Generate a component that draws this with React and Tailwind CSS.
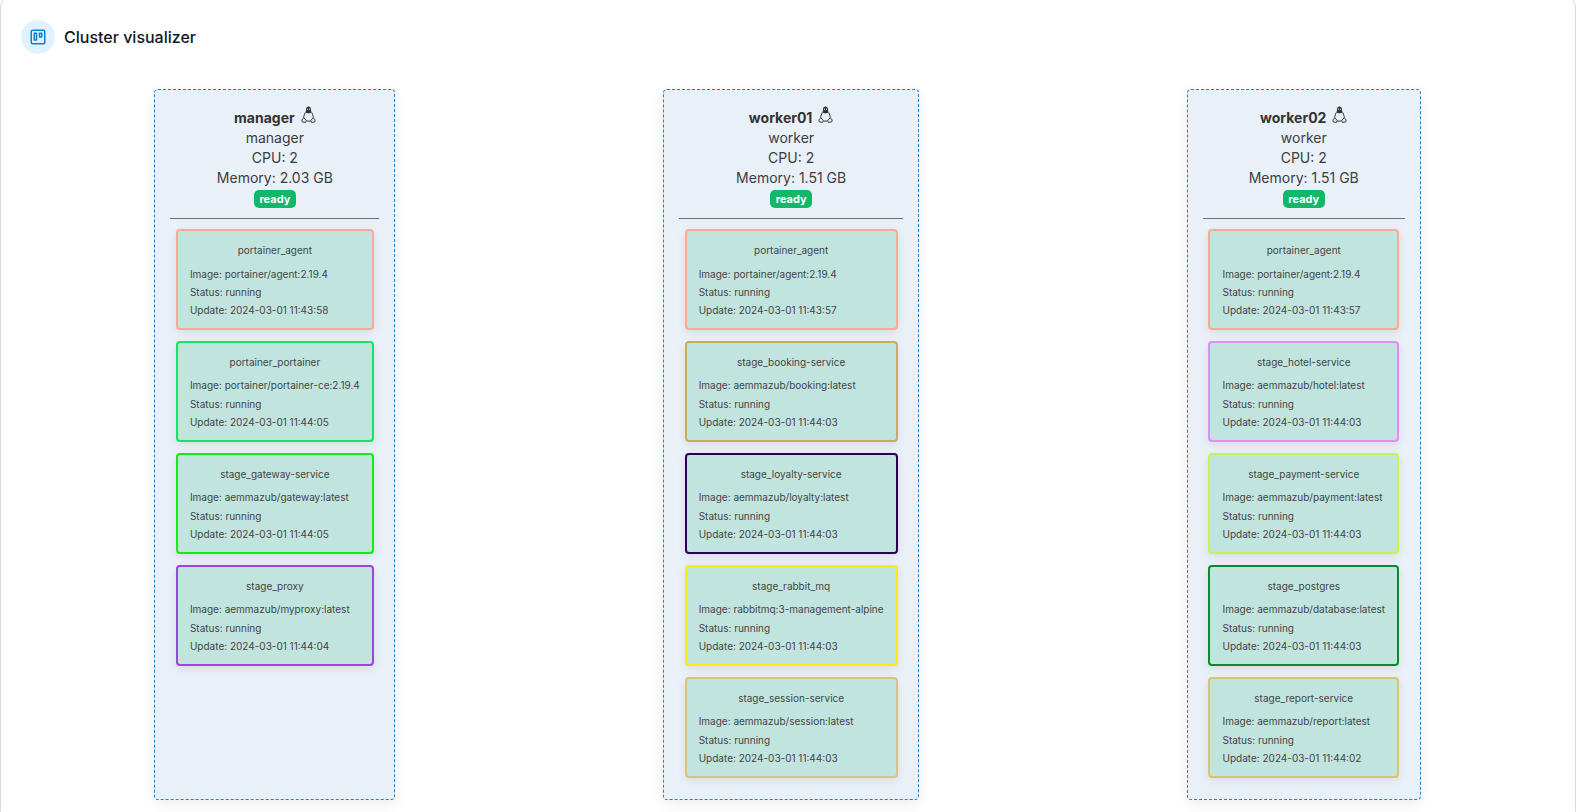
import React from 'react';
import { Trello } from 'lucide-react';

const nodes = [
  {
    name: 'manager',
    role: 'manager',
    memory: '2.03 GB',
    tasks: [
      { name: 'portainer_agent', image: 'portainer/agent:2.19.4', update: '2024-03-01 11:43:58', border: 'border-[#ffa899]' },
      { name: 'portainer_portainer', image: 'portainer/portainer-ce:2.19.4', update: '2024-03-01 11:44:05', border: 'border-[#0ce864]' },
      { name: 'stage_gateway-service', image: 'aemmazub/gateway:latest', update: '2024-03-01 11:44:05', border: 'border-[#0cf00c]' },
      { name: 'stage_proxy', image: 'aemmazub/myproxy:latest', update: '2024-03-01 11:44:04', border: 'border-[#9e42e0]' },
    ],
  },
  {
    name: 'worker01',
    role: 'worker',
    memory: '1.51 GB',
    tasks: [
      { name: 'portainer_agent', image: 'portainer/agent:2.19.4', update: '2024-03-01 11:43:57', border: 'border-[#ffa899]' },
      { name: 'stage_booking-service', image: 'aemmazub/booking:latest', update: '2024-03-01 11:44:03', border: 'border-[#c6b055]' },
      { name: 'stage_loyalty-service', image: 'aemmazub/loyalty:latest', update: '2024-03-01 11:44:03', border: 'border-[#2b0052]' },
      { name: 'stage_rabbit_mq', image: 'rabbitmq:3-management-alpine', update: '2024-03-01 11:44:03', border: 'border-[#f3ef12]' },
      { name: 'stage_session-service', image: 'aemmazub/session:latest', update: '2024-03-01 11:44:03', border: 'border-[#d5c67e]' },
    ],
  },
  {
    name: 'worker02',
    role: 'worker',
    memory: '1.51 GB',
    tasks: [
      { name: 'portainer_agent', image: 'portainer/agent:2.19.4', update: '2024-03-01 11:43:57', border: 'border-[#ffa899]' },
      { name: 'stage_hotel-service', image: 'aemmazub/hotel:latest', update: '2024-03-01 11:44:03', border: 'border-[#e28eec]' },
      { name: 'stage_payment-service', image: 'aemmazub/payment:latest', update: '2024-03-01 11:44:03', border: 'border-[#c9f44c]' },
      { name: 'stage_postgres', image: 'aemmazub/database:latest', update: '2024-03-01 11:44:03', border: 'border-[#0a8a30]' },
      { name: 'stage_report-service', image: 'aemmazub/report:latest', update: '2024-03-01 11:44:02', border: 'border-[#d5c674]' },
    ],
  },
];

function LinuxIcon() {
  return (
    <svg width="15" height="17" viewBox="0 0 14 16" fill="none" className="shrink-0">
      <path d="M7 .5C5.200.5 4.600 2 4.600 3.500c0 1-.2 1.700-.6 2.500l3 1 3-1c-.4-.8-.6-1.500-.6-2.500C9.400 2 8.800.5 7 .5z" fill="#333" />
      <circle cx="6" cy="3" r=".6" fill="#e9f0f8" />
      <circle cx="8" cy="3" r=".6" fill="#e9f0f8" />
      <path d="M4 6 2.600 9.500 2.400 11M10 6l1.400 3.500.2 1.500" stroke="#333" strokeWidth=".9" />
      <path d="M5 14.200h4" stroke="#333" strokeWidth=".9" />
      <path d="M.7 13.200 2.600 11l2.300 2.700-.8 1.800-3-.6zM13.300 13.200 11.400 11l-2.300 2.700.8 1.800 3-.6z" stroke="#333" strokeWidth=".9" strokeLinejoin="round" />
    </svg>
  );
}

function Task({ task }) {
  return (
    <div className={`mx-[5.5px] mb-[11px] rounded-[4px] border-2 bg-[#c2e4de] pt-[10px] pb-[8.500px] pl-[12px] pr-[12px] text-[10px] leading-[18.33px] text-[#444] shadow-[0_3px_10px_rgba(0,0,0,0.08)] ${task.border}`}>
      <div className="mb-[5.500px] h-[18px] text-center leading-[18px]">{task.name}</div>
      <div className="whitespace-nowrap">Image: {task.image}</div>
      <div>Status: running</div>
      <div className="whitespace-nowrap">Update: {task.update}</div>
    </div>
  );
}

function Node({ node }) {
  return (
    <div className="rounded-[4px] border border-dashed border-[#2b7cc4] bg-[#e9f0f8] px-[15px] pt-[17px] pb-[10px] shadow-[0_4px_14px_rgba(0,0,0,0.08)]">
      <div className="text-center text-[14px] leading-[20px] text-[#3d3d3d]">
        <div className="flex h-[21px] items-center justify-center gap-[6px] text-[#333]">
          <span className="font-bold">{node.name}</span>
          <span className="-mt-[7px]"><LinuxIcon /></span>
        </div>
        <div>{node.role}</div>
        <div>CPU: 2</div>
        <div>Memory: {node.memory}</div>
        <div className="mt-[2px] flex justify-center">
          <span className="flex h-[18px] w-[42px] items-center justify-center rounded-[5px] bg-[#12b76a] text-[11px] font-bold text-white">ready</span>
        </div>
      </div>
      <hr className="mt-[10px] mb-[10px] border-t border-[#6f6f6f]" />
      {node.tasks.map((task) => (
        <Task key={task.name} task={task} />
      ))}
    </div>
  );
}

export default function App() {
  return (
    <div className="h-screen overflow-hidden bg-white font-['Inter',sans-serif]">
      <div className="mr-[1px] -mt-[3px] rounded-[10px] border border-[#d5dae3] bg-white pb-[20px]">
        <div className="flex items-center gap-[9px] pl-[20px] pt-[22px]">
          <div className="flex h-[34px] w-[34px] items-center justify-center rounded-full bg-[#e0f2ff]">
            <Trello size={18} strokeWidth={2} className="text-[#0086c9]" />
          </div>
          <h1 className="text-[16px] font-medium text-[#101828]">Cluster visualizer</h1>
        </div>
        <div className="mt-[35px] flex justify-around pl-[19.5px] pr-[20.5px]">
          {nodes.map((node) => (
            <Node key={node.name} node={node} />
          ))}
        </div>
      </div>
    </div>
  );
}
